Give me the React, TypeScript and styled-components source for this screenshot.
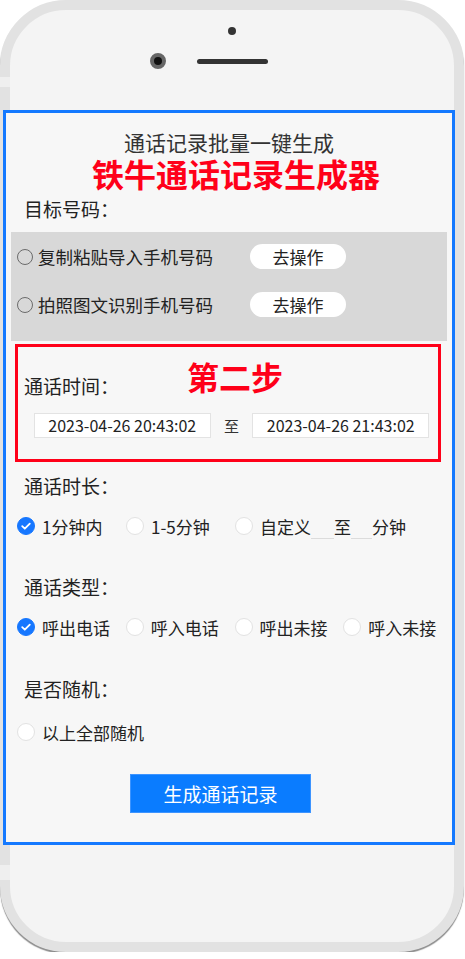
import styled, { createGlobalStyle } from "styled-components";

const GlobalStyle = createGlobalStyle`
  body {
    margin: 0;
    background: #ffffff;
    font-family: "Noto Sans CJK SC", "Noto Sans", sans-serif;
  }
`;

const Phone = styled.div`
  position: relative;
  width: 464px;
  height: 952px;
  box-sizing: border-box;
  border: 10px solid #e2e2e2;
  border-radius: 66px;
  background: #f4f4f4;
  box-shadow: 0 2px 1px rgba(0, 0, 0, 0.45);
  display: flex;
  flex-direction: column;
`;

const SideKey = styled.div<{ $top: number }>`
  position: absolute;
  left: -10px;
  top: ${(p) => p.$top}px;
  width: 10px;
  height: ${(p) => (p.$top > 400 ? 15 : 10)}px;
  background: #efefef;
`;

const TopBezel = styled.div`
  height: 100px;
  display: flex;
  flex-direction: column;
`;

const Sensor = styled.div`
  width: 8px;
  height: 8px;
  border-radius: 50%;
  background: #333;
  margin: 17px 0 0 218px;
`;

const CameraRow = styled.div`
  display: flex;
  align-items: center;
  gap: 31px;
  margin: 18px 0 0 140px;
`;

const Camera = styled.div`
  width: 16px;
  height: 16px;
  box-sizing: border-box;
  border-radius: 50%;
  background: #111;
  border: 4px solid #666;
`;

const Speaker = styled.div`
  width: 71px;
  height: 5px;
  border-radius: 3px;
  background: #333;
`;

const Screen = styled.div`
  margin: 0 -1px 0 -7px;
  height: 735px;
  box-sizing: border-box;
  border: 3px solid #1479ff;
  background: #f7f7f7;
  padding-top: 17px;
  display: flex;
  flex-direction: column;
  color: #222;
`;

const Title = styled.div`
  font-size: 21px;
  line-height: 24px;
  color: #333;
  text-align: center;
`;

const Brand = styled.div`
  font-size: 32px;
  line-height: 36px;
  margin-top: 1px;
  font-weight: 700;
  color: #ff0019;
  text-align: center;
  padding-left: 14px;
`;

const Label = styled.div<{ $mt: number; $inset?: boolean }>`
  font-size: 19px;
  line-height: 26px;
  color: #222;
  margin-top: ${(p) => p.$mt}px;
  margin-left: ${(p) => (p.$inset ? 0 : 18)}px;
`;

const Targets = styled.div`
  margin: 10px 5px 0;
  background: #d8d8d8;
  padding: 12px 0 24px 6px;
  display: flex;
  flex-direction: column;
  gap: 23px;
`;

const TargetRow = styled.div`
  display: flex;
  align-items: center;
  height: 25px;
`;

const Ring = styled.span`
  width: 16px;
  height: 16px;
  box-sizing: border-box;
  border: 1px solid #6b6b6b;
  border-radius: 50%;
  margin-right: 5px;
`;

const TargetText = styled.span`
  width: 212px;
  font-size: 17.5px;
  color: #222;
`;

const PillButton = styled.button`
  width: 96px;
  height: 25px;
  border: none;
  border-radius: 13px;
  background: #fff;
  font-family: inherit;
  font-size: 17px;
  color: #222;
  padding: 0;
`;

const StepBox = styled.div`
  margin: 3px 11px 0 9px;
  border: 3px solid #ff0019;
  padding: 11px 9px 21px 6px;
  display: flex;
  flex-direction: column;
`;

const StepHead = styled.div`
  display: flex;
  align-items: flex-start;
`;

const StepMark = styled.div`
  font-size: 32px;
  line-height: 36px;
  font-weight: 700;
  color: #ff0019;
  margin-left: 68px;
`;

const DatesRow = styled.div`
  display: flex;
  align-items: center;
  margin-top: 14px;
  padding-left: 10px;
`;

const DateField = styled.div`
  width: 177px;
  height: 25px;
  box-sizing: border-box;
  border: 1px solid #e3e3e3;
  background: #fff;
  font-size: 16px;
  line-height: 23px;
  text-align: center;
  color: #222;
`;

const DateSep = styled.span`
  width: 42px;
  text-align: center;
  font-size: 15px;
  color: #333;
`;

const OptionRow = styled.div<{ $mt: number }>`
  display: flex;
  align-items: center;
  height: 26px;
  margin: ${(p) => p.$mt}px 0 0 11px;
`;

const Option = styled.label<{ $wide?: boolean }>`
  display: flex;
  align-items: center;
  width: ${(p) => (p.$wide ? "auto" : "109px")};
  height: 26px;
  font-size: 17px;
  color: #222;
  white-space: nowrap;
`;

const Dot = styled.span<{ $on?: boolean }>`
  width: 18px;
  height: 18px;
  box-sizing: border-box;
  border-radius: 50%;
  margin-right: 7px;
  background: ${(p) => (p.$on ? "#1677ff" : "#fff")};
  border: 1px solid ${(p) => (p.$on ? "#1677ff" : "#e2e2e2")};
  display: flex;
  align-items: center;
  justify-content: center;
  flex-shrink: 0;
`;

const Blank = styled.span<{ $w: number }>`
  width: ${(p) => p.$w}px;
  height: 26px;
  box-sizing: border-box;
  border-bottom: 1px solid #dcdcdc;
`;

const Submit = styled.button`
  margin: 29px 0 0 124px;
  width: 181px;
  height: 39px;
  border: 1px solid #3d94ff;
  background: #0a7cff;
  color: #fff;
  font-family: inherit;
  font-size: 19px;
  padding: 0;
`;

function Check() {
  return (
    <svg width="12" height="12" viewBox="0 0 12 12" fill="none">
      <path
        d="M2.2 6.2l2.6 2.5L9.8 3.6"
        stroke="#fff"
        strokeWidth="1.8"
        strokeLinecap="round"
        strokeLinejoin="round"
      />
    </svg>
  );
}

function Choice(props: { on?: boolean; wide?: boolean; text: string }) {
  return (
    <Option $wide={props.wide}>
      <Dot $on={props.on}>{props.on && <Check />}</Dot>
      {props.text}
    </Option>
  );
}

export default function App() {
  return (
    <>
      <GlobalStyle />
      <Phone>
        <SideKey $top={67} />
        <SideKey $top={855} />
        <TopBezel>
          <Sensor />
          <CameraRow>
            <Camera />
            <Speaker />
          </CameraRow>
        </TopBezel>

        <Screen>
          <Title>通话记录批量一键生成</Title>
          <Brand>铁牛通话记录生成器</Brand>

          <Label $mt={5}>目标号码：</Label>
          <Targets>
            <TargetRow>
              <Ring />
              <TargetText>复制粘贴导入手机号码</TargetText>
              <PillButton>去操作</PillButton>
            </TargetRow>
            <TargetRow>
              <Ring />
              <TargetText>拍照图文识别手机号码</TargetText>
              <PillButton>去操作</PillButton>
            </TargetRow>
          </Targets>

          <StepBox>
            <StepHead>
              <Label $mt={15} $inset>
                通话时间：
              </Label>
              <StepMark>第二步</StepMark>
            </StepHead>
            <DatesRow>
              <DateField>2023-04-26 20:43:02</DateField>
              <DateSep>至</DateSep>
              <DateField>2023-04-26 21:43:02</DateField>
            </DatesRow>
          </StepBox>

          <Label $mt={11}>通话时长：</Label>
          <OptionRow $mt={14}>
            <Choice on text="1分钟内" />
            <Choice text="1-5分钟" />
            <Option $wide>
              <Dot />
              自定义
              <Blank $w={23} />
              至
              <Blank $w={21} />
              分钟
            </Option>
          </OptionRow>

          <Label $mt={35}>通话类型：</Label>
          <OptionRow $mt={14}>
            <Choice on text="呼出电话" />
            <Choice text="呼入电话" />
            <Choice text="呼出未接" />
            <Choice text="呼入未接" />
          </OptionRow>

          <Label $mt={36}>是否随机：</Label>
          <OptionRow $mt={17}>
            <Choice wide text="以上全部随机" />
          </OptionRow>

          <Submit>生成通话记录</Submit>
        </Screen>
      </Phone>
    </>
  );
}
